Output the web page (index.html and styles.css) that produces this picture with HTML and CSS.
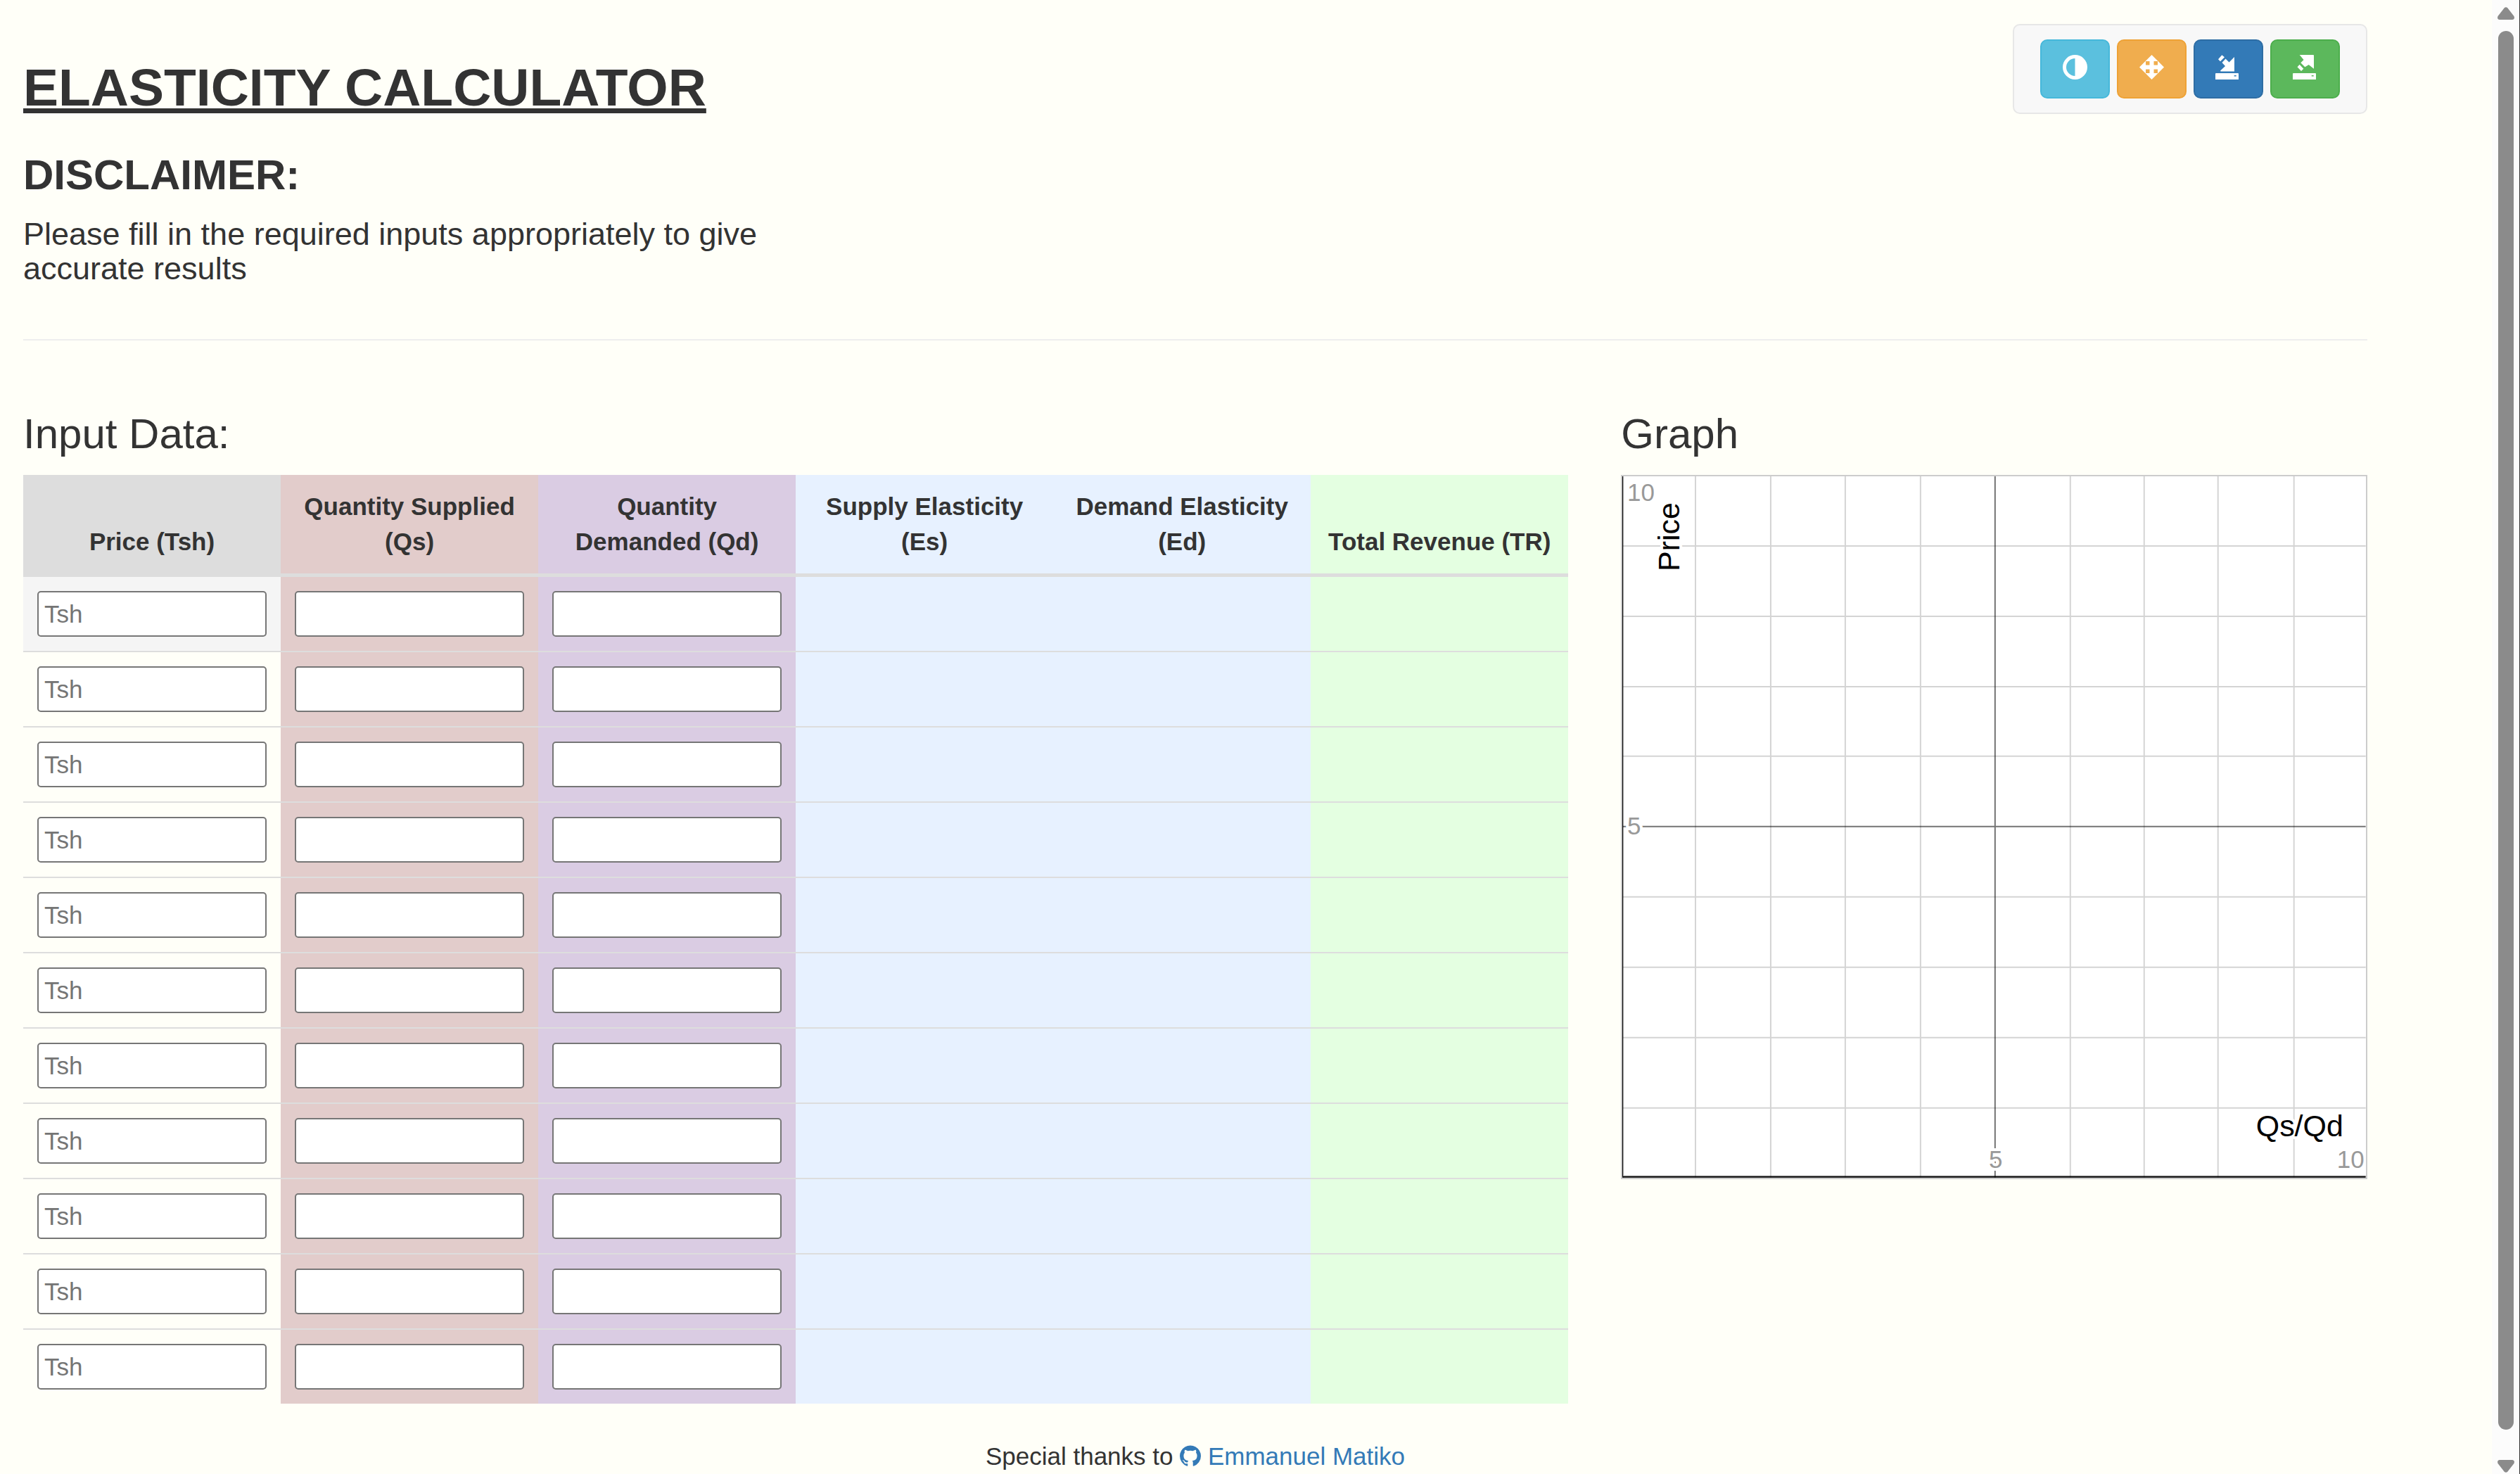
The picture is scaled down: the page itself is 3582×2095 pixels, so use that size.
FILE: index.html
```html
<!DOCTYPE html>
<html lang="en">
<head>
<meta charset="utf-8">
<title>Elasticity Calculator</title>
<link rel="stylesheet" href="styles.css">
</head>
<body>
<div class="page">
  <header class="masthead">
    <div class="intro">
      <h1 class="title">ELASTICITY CALCULATOR</h1>
      <h2 class="subtitle">DISCLAIMER:</h2>
      <p class="lead">Please fill in the required inputs appropriately to give accurate results</p>
    </div>
    <div class="toolbar">
      <button class="btn btn-info" type="button" aria-label="Contrast">
        <svg class="icon" viewBox="0 0 35 35"><path fill-rule="evenodd" d="M17.500 0A17.500 17.500 0 1 1 17.500 35A17.500 17.500 0 1 1 17.500 0ZM17.500 5A12.500 12.500 0 0 0 17.500 30Z"/></svg>
      </button>
      <button class="btn btn-warning" type="button" aria-label="Move">
        <svg class="icon" viewBox="0 0 35 35"><path fill-rule="evenodd" d="M17.500 0L35 17.500L17.500 35L0 17.500ZM9 9V14.500H14.500V9ZM20.500 9V14.500H26V9ZM9 20.500V26H14.500V20.500ZM20.500 20.500V26H26V20.500Z"/></svg>
      </button>
      <button class="btn btn-primary" type="button" aria-label="Save">
        <svg class="icon" viewBox="0 0 35 35"><path fill-rule="evenodd" d="M8.300 0.300L12 3.300L6 9.300L3 6.300ZM13.500 5.500L8.500 11L13 16L6 22.500Q6 23.600 7 23.600H26V3L18.500 10.500ZM0 26H31Q32 26 32 27V35H-1V27Q-1 26 0 26ZM25.700 29V30.500H28.700V29Z"/></svg>
      </button>
      <button class="btn btn-success" type="button" aria-label="Open">
        <svg class="icon" viewBox="0 0 35 35"><path fill-rule="evenodd" d="M9.700 0H29Q30 0 30 1V19.700L22.700 14L17.300 17.300L11.300 11.300L15.500 7ZM9.700 13.700L15.300 19.700L12 23L6.500 17.300ZM1 26H32Q33 26 33 27V35H0V27Q0 26 1 26ZM26.700 29V30.500H29.700V29Z"/></svg>
      </button>
    </div>
  </header>
  <main class="content">
    <section class="data">
      <h2 class="heading">Input Data:</h2>
      <table class="grid">
        <thead>
          <tr>
            <th class="price" scope="col">Price (Tsh)</th>
            <th class="supplied" scope="col">Quantity Supplied (Qs)</th>
            <th class="demanded" scope="col">Quantity Demanded (Qd)</th>
            <th class="elasticity" scope="col">Supply Elasticity (Es)</th>
            <th class="elasticity" scope="col">Demand Elasticity (Ed)</th>
            <th class="revenue" scope="col">Total Revenue (TR)</th>
          </tr>
        </thead>
        <tbody>
          <tr><td class="price"><input aria-label="Price 1" placeholder="Tsh"></td><td class="supplied"><input aria-label="Quantity supplied 1"></td><td class="demanded"><input aria-label="Quantity demanded 1"></td><td class="elasticity"></td><td class="elasticity"></td><td class="revenue"></td></tr>
          <tr><td class="price"><input aria-label="Price 2" placeholder="Tsh"></td><td class="supplied"><input aria-label="Quantity supplied 2"></td><td class="demanded"><input aria-label="Quantity demanded 2"></td><td class="elasticity"></td><td class="elasticity"></td><td class="revenue"></td></tr>
          <tr><td class="price"><input aria-label="Price 3" placeholder="Tsh"></td><td class="supplied"><input aria-label="Quantity supplied 3"></td><td class="demanded"><input aria-label="Quantity demanded 3"></td><td class="elasticity"></td><td class="elasticity"></td><td class="revenue"></td></tr>
          <tr><td class="price"><input aria-label="Price 4" placeholder="Tsh"></td><td class="supplied"><input aria-label="Quantity supplied 4"></td><td class="demanded"><input aria-label="Quantity demanded 4"></td><td class="elasticity"></td><td class="elasticity"></td><td class="revenue"></td></tr>
          <tr><td class="price"><input aria-label="Price 5" placeholder="Tsh"></td><td class="supplied"><input aria-label="Quantity supplied 5"></td><td class="demanded"><input aria-label="Quantity demanded 5"></td><td class="elasticity"></td><td class="elasticity"></td><td class="revenue"></td></tr>
          <tr><td class="price"><input aria-label="Price 6" placeholder="Tsh"></td><td class="supplied"><input aria-label="Quantity supplied 6"></td><td class="demanded"><input aria-label="Quantity demanded 6"></td><td class="elasticity"></td><td class="elasticity"></td><td class="revenue"></td></tr>
          <tr><td class="price"><input aria-label="Price 7" placeholder="Tsh"></td><td class="supplied"><input aria-label="Quantity supplied 7"></td><td class="demanded"><input aria-label="Quantity demanded 7"></td><td class="elasticity"></td><td class="elasticity"></td><td class="revenue"></td></tr>
          <tr><td class="price"><input aria-label="Price 8" placeholder="Tsh"></td><td class="supplied"><input aria-label="Quantity supplied 8"></td><td class="demanded"><input aria-label="Quantity demanded 8"></td><td class="elasticity"></td><td class="elasticity"></td><td class="revenue"></td></tr>
          <tr><td class="price"><input aria-label="Price 9" placeholder="Tsh"></td><td class="supplied"><input aria-label="Quantity supplied 9"></td><td class="demanded"><input aria-label="Quantity demanded 9"></td><td class="elasticity"></td><td class="elasticity"></td><td class="revenue"></td></tr>
          <tr><td class="price"><input aria-label="Price 10" placeholder="Tsh"></td><td class="supplied"><input aria-label="Quantity supplied 10"></td><td class="demanded"><input aria-label="Quantity demanded 10"></td><td class="elasticity"></td><td class="elasticity"></td><td class="revenue"></td></tr>
          <tr><td class="price"><input aria-label="Price 11" placeholder="Tsh"></td><td class="supplied"><input aria-label="Quantity supplied 11"></td><td class="demanded"><input aria-label="Quantity demanded 11"></td><td class="elasticity"></td><td class="elasticity"></td><td class="revenue"></td></tr>
        </tbody>
      </table>
    </section>
    <section class="graph">
      <h2 class="heading">Graph</h2>
      <svg class="plot" viewBox="0 0 1057 997" role="img" aria-label="Price against quantity">
        <path class="minor" d="M104 0V997M211 0V997M317 0V997M424 0V997M637 0V997M742 0V997M847 0V997M955 0V997M0 99H1057M0 199H1057M0 299H1057M0 398H1057M0 598H1057M0 698H1057M0 798H1057M0 898H1057"/>
        <path class="major" d="M530 0V997M0 498H1057"/>
        <path class="axis-soft" d="M1 0V997M0 995H1057"/>
        <path class="axis" d="M0 0V997M0 996H1057"/>
        <text class="tick" x="7" y="35">10</text>
        <text class="tick" x="7" y="509">5</text>
        <text class="tick" x="531" y="983" text-anchor="middle">5</text>
        <text class="tick" x="1055" y="983" text-anchor="end">10</text>
        <text class="axis-name" transform="translate(81 135) rotate(-90)">Price</text>
        <text class="axis-name" x="901" y="938">Qs/Qd</text>
      </svg>
    </section>
  </main>
  <footer class="credits">Special thanks to <a href="#"><svg class="github" viewBox="0 0 1536 1792"><path d="M768 128q209 0 385.500 103t279.500 279.500 103 385.500q0 251-146.500 451.500t-378.500 277.500q-27 5-40-7t-13-30q0-3 .5-76.500t.5-134.500q0-97-52-142 57-6 102.500-18t94-39 81-66.500 53-105 20.500-150.500q0-119-79-206 37-91-8-204-28-9-81 11t-92 44l-38 24q-93-26-192-26t-192 26q-16-11-42.500-27t-83.500-38.500-85-13.500q-45 113-8 204-79 87-79 206 0 85 20.500 150t52.500 105 80.500 67 94 39 102.500 18q-39 36-49 103-21 10-45 15t-57 5-65.500-21.500-55.500-62.500q-19-32-48.500-52t-49.500-24l-20-3q-21 0-29 4.500t-5 11.500 9 14 13 12l7 5q22 10 43.500 38t31.500 51l10 23q13 38 44 61.500t67 30 69.500 7 55.500-3.500l23-4q0 38 .5 88.500t.5 54.500q0 18-13 30t-40 7q-232-77-378.500-277.500t-146.500-451.500q0-209 103-385.500t279.500-279.500 385.500-103z"/></svg> Emmanuel Matiko</a></footer>
</div>
<div class="scrollbar" aria-hidden="true">
  <svg class="arrow" viewBox="0 0 24 18"><path d="M9.500 1.500Q12 -1 14.500 1.500L23.500 13Q25 17.500 21 18H3Q-1 17.500 0.500 13Z"/></svg>
  <div class="thumb"></div>
  <svg class="arrow" viewBox="0 0 24 18"><path d="M9.500 16.500Q12 19 14.500 16.500L23.500 5Q25 0.500 21 0H3Q-1 0.500 0.500 5Z"/></svg>
</div>
</body>
</html>
```
FILE: styles.css
```css
* {
  box-sizing: border-box;
}

body {
  margin: 0;
  display: flex;
  align-items: flex-start;
  background: #fffff8;
  color: #333;
  font: 35px/50px "Liberation Sans", Arial, sans-serif;
}

.page {
  flex: 1;
  min-width: 0;
  padding: 34px 177px 0 33px;
}

.masthead {
  display: flex;
  justify-content: space-between;
  align-items: flex-start;
  padding-bottom: 76px;
  border-bottom: 2px solid #eee;
}

.intro {
  width: 33%;
  padding-top: 49px;
}

.title {
  margin: 0 0 51px;
  font-size: 75px;
  line-height: 82px;
  text-decoration: underline;
  white-space: nowrap;
}

.subtitle {
  margin: 0 0 26px;
  font-size: 60px;
  line-height: 66px;
}

.lead {
  margin: 0;
  font-size: 45px;
  line-height: 49px;
}

.toolbar {
  display: flex;
  gap: 10px;
  padding: 20px 37px;
  border: 2px solid #e7e7e7;
  border-radius: 10px;
  background: #f8f8f8;
}

.btn {
  display: flex;
  height: 84px;
  padding: 20px 30px;
  border: 2px solid;
  border-radius: 10px;
}

.btn-info {
  background: #5bc0de;
  border-color: #46b8da;
}

.btn-warning {
  background: #f0ad4e;
  border-color: #eea236;
}

.btn-primary {
  background: #337ab7;
  border-color: #2e6da4;
}

.btn-success {
  background: #5cb85c;
  border-color: #4cae4c;
}

.icon {
  width: 35px;
  height: 35px;
  fill: #fff;
  overflow: visible;
}

.content {
  display: grid;
  grid-template-columns: repeat(3, 1fr);
  column-gap: 75px;
  margin-top: 100px;
}

.data {
  grid-column: span 2;
}

.heading {
  margin: 0 0 25px;
  font-size: 60px;
  line-height: 66px;
  font-weight: normal;
}

.grid {
  width: 100%;
  table-layout: fixed;
  border-collapse: separate;
  border-spacing: 0;
}

.grid th {
  padding: 20px;
  border-bottom: 5px solid #ddd;
  vertical-align: bottom;
  text-align: center;
}

.grid td {
  padding: 20px;
  border-top: 2px solid #ddd;
}

.grid tbody tr:first-child td {
  border-top: 0;
}

.grid th.price {
  background: #ddd;
}

.grid tbody tr:first-child .price {
  background: #f5f5f5;
}

.supplied {
  background: #e2cccb;
}

.demanded {
  background: #dacce3;
}

.elasticity {
  background: #e7f1ff;
}

.revenue {
  background: #e4ffe1;
}

.grid th.revenue {
  white-space: nowrap;
}

.grid input {
  display: block;
  width: 100%;
  height: 65px;
  padding: 0 8px;
  border: 2px solid #767676;
  border-radius: 5px;
  background: #fff;
  color: #333;
  font: inherit;
}

.grid input::placeholder {
  color: #757575;
}

.plot {
  display: block;
  width: 100%;
  border: 2px solid #ccc;
  background: #fff;
  font-family: "Liberation Sans", Arial, sans-serif;
}

.minor,
.major,
.axis,
.axis-soft {
  fill: none;
  stroke: #000;
  stroke-width: 2px;
}

.minor {
  stroke-opacity: 0.17;
}

.major {
  stroke-opacity: 0.55;
}

.axis-soft {
  stroke-opacity: 0.3;
}

.tick,
.axis-name {
  stroke: #fff;
  stroke-width: 8px;
  stroke-linejoin: round;
  paint-order: stroke;
}

.tick {
  font-size: 35px;
  fill: #999;
}

.axis-name {
  font-size: 43px;
  fill: #000;
}

.credits {
  margin-top: 50px;
  text-align: center;
}

.credits a {
  color: #337ab7;
  text-decoration: none;
}

.github {
  width: 30px;
  height: 35px;
  fill: #337ab7;
  vertical-align: -5px;
}

.scrollbar {
  position: sticky;
  top: 0;
  flex: none;
  display: flex;
  flex-direction: column;
  align-items: center;
  width: 40px;
  height: 100vh;
  padding: 10px 0 2px;
  border-right: 1px solid #333;
  background: #fcfcfc;
}

.arrow {
  width: 24px;
  height: 18px;
  fill: #8b8b8b;
}

.thumb {
  flex: 1;
  width: 22px;
  margin: 16px 0 43px;
  border-radius: 11px;
  background: #8b8b8b;
}
```
